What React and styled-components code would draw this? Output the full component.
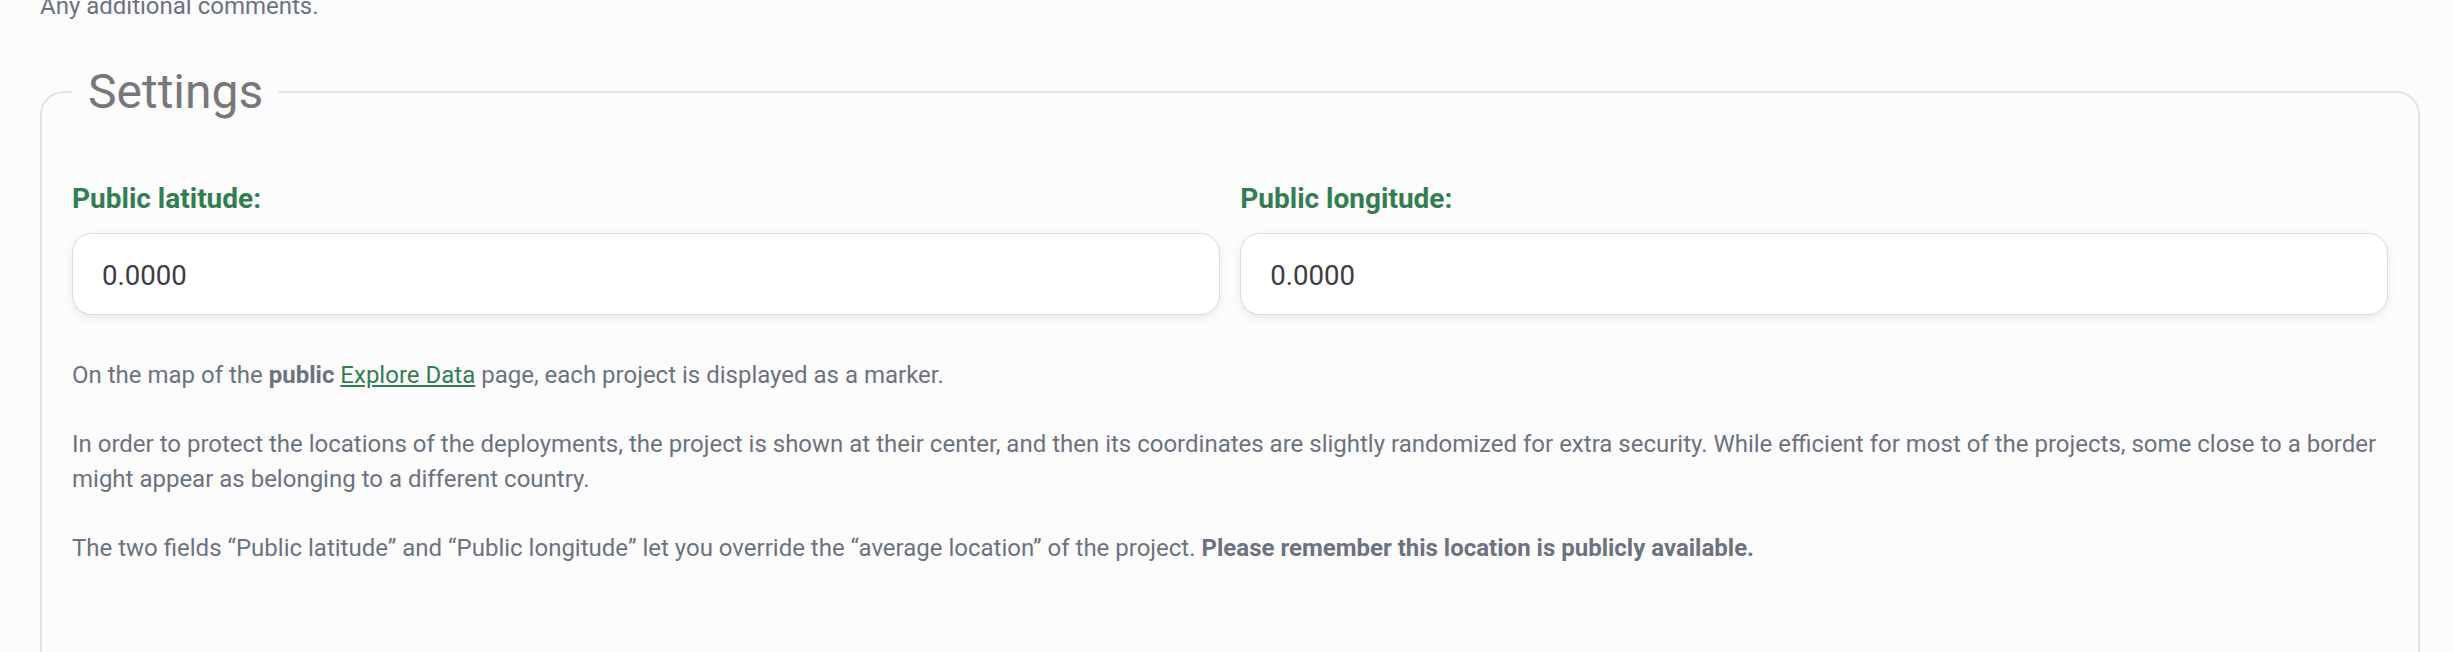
import styled, { createGlobalStyle } from 'styled-components';

const GlobalStyle = createGlobalStyle`
    body {
        margin: 0;
        background-color: #fcfcfc;
        font-family: Roboto, "Liberation Sans", sans-serif;
    }
`;

const Page = styled.div`
    padding: 0 34px 0 40px;
`;

const Hint = styled.p`
    margin: -11.5px 0 0;
    font-size: 24px;
    line-height: 34.5px;
    color: #6b7280;
`;

const Settings = styled.fieldset`
    margin: 40px 0 0;
    min-width: 0;
    border: 2px solid #e3e3e3;
    border-radius: 24px;
    padding: 57.4px 30px 120px;

    legend {
        padding: 0 16px;
        font-size: 48px;
        line-height: 1.2;
        font-weight: 400;
        color: #77777c;
    }
`;

const Grid = styled.div`
    display: grid;
    grid-template-columns: 1fr 1fr;
    column-gap: 20.5px;
    margin-bottom: 43px;
`;

const Field = styled.div`
    display: flex;
    flex-direction: column;
    min-width: 0;

    label {
        font-size: 28px;
        line-height: 41.4px;
        font-weight: 700;
        color: #327e52;
        margin-bottom: 14px;
    }

    input {
        box-sizing: border-box;
        width: 100%;
        height: 82px;
        border: 1.5px solid #d2e2de;
        border-radius: 20px;
        background-color: #fff;
        padding: 3px 29px 0;
        font-family: inherit;
        font-size: 27.6px;
        color: #3d3c44;
        box-shadow: 0 3px 8px rgba(30, 60, 50, 0.09);
        outline: none;
    }
`;

const Text = styled.p`
    margin: 0 0 34.5px;
    font-size: 24px;
    line-height: 34.5px;
    color: #6b7280;

    b {
        font-weight: 700;
    }

    a {
        color: #327e52;
        text-decoration: underline;
    }
`;

const App = () => {
    return (
        <Page>
            <GlobalStyle />
            <Hint>Any additional comments.</Hint>
            <Settings>
                <legend>Settings</legend>
                <Grid>
                    <Field>
                        <label htmlFor="lat">Public latitude:</label>
                        <input id="lat" type="text" defaultValue="0.0000" />
                    </Field>
                    <Field>
                        <label htmlFor="lng">Public longitude:</label>
                        <input id="lng" type="text" defaultValue="0.0000" />
                    </Field>
                </Grid>
                <Text>
                    On the map of the <b>public</b> <a href="#explore">Explore Data</a> page, each project is
                    displayed as a marker.
                </Text>
                <Text>
                    In order to protect the locations of the deployments, the project is shown at their center, and
                    then its coordinates are slightly randomized for extra security. While efficient for most of the
                    projects, some close to a border might appear as belonging to a different country.
                </Text>
                <Text>
                    The two fields “Public latitude” and “Public longitude” let you override the “average location” of
                    the project. <b>Please remember this location is publicly available.</b>
                </Text>
            </Settings>
        </Page>
    );
};

export default App;
